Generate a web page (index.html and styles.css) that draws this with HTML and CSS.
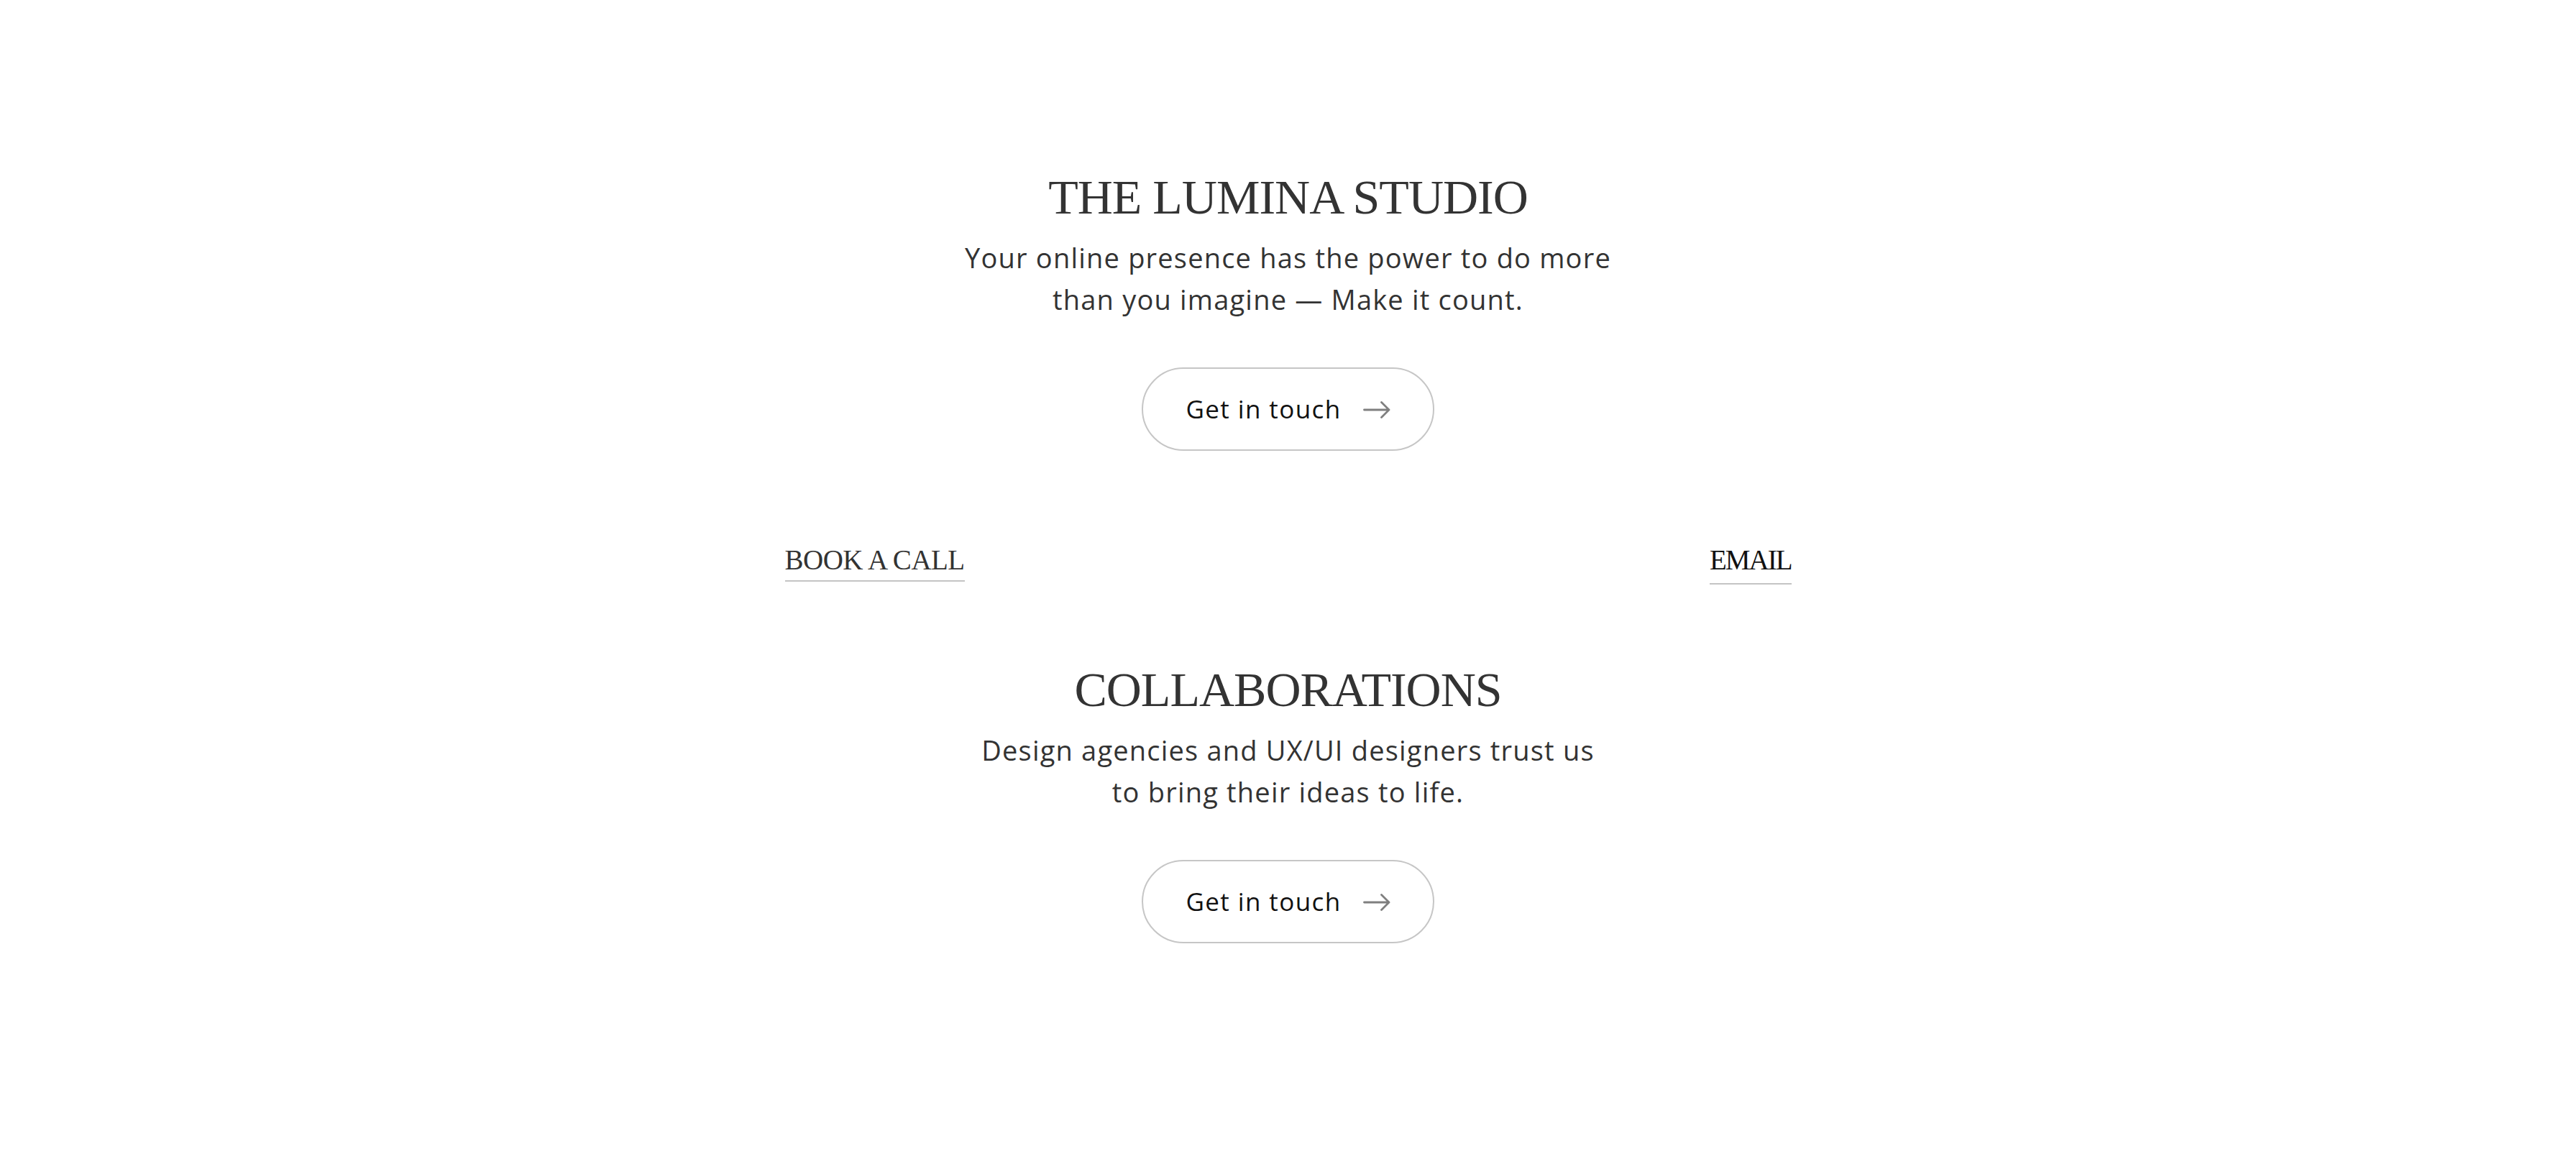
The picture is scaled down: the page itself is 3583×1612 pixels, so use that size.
FILE: index.html
```html
<!DOCTYPE html>
<html lang="en">
<head>
<meta charset="utf-8">
<title>The Lumina Studio</title>
<link rel="stylesheet" href="styles.css">
</head>
<body>
<main class="page">
  <section class="block">
    <h1 class="heading">THE LUMINA STUDIO</h1>
    <p class="lead">Your online presence has the power to do more<br>than you imagine — Make it count.</p>
    <a class="pill" href="#">
      <span class="pill-label">Get in touch</span>
      <svg class="pill-arrow" viewBox="0 0 38 24" width="38" height="24" aria-hidden="true"><path d="M1.5 12H36M25.5 1.5L36 12L25.5 22.5" fill="none" stroke="#7f7f7f" stroke-width="2.8" stroke-linecap="round" stroke-linejoin="round"/></svg>
    </a>
  </section>

  <nav class="links">
    <a class="link" href="#">BOOK A CALL</a>
    <a class="link link-email" href="#">EMAIL</a>
  </nav>

  <section class="block block-second">
    <h2 class="heading">COLLABORATIONS</h2>
    <p class="lead">Design agencies and UX/UI designers trust us<br>to bring their ideas to life.</p>
    <a class="pill" href="#">
      <span class="pill-label">Get in touch</span>
      <svg class="pill-arrow" viewBox="0 0 38 24" width="38" height="24" aria-hidden="true"><path d="M1.5 12H36M25.5 1.5L36 12L25.5 22.5" fill="none" stroke="#7f7f7f" stroke-width="2.8" stroke-linecap="round" stroke-linejoin="round"/></svg>
    </a>
  </section>
</main>
</body>
</html>
```

FILE: styles.css
```css
html, body {
  margin: 0;
  padding: 0;
  background: #ffffff;
}

body {
  font-family: "Open Sans", "Liberation Sans", sans-serif;
  color: #333333;
}

.page {
  width: 1400px;
  margin: 0 auto;
  padding-top: 234px;
  display: flex;
  flex-direction: column;
}

.block {
  display: flex;
  flex-direction: column;
  align-items: center;
  text-align: center;
}

.block-second {
  margin-top: 106px;
}

.heading {
  margin: 0;
  font-family: "Liberation Serif", "Times New Roman", serif;
  font-weight: 400;
  font-size: 68px;
  line-height: 80px;
  letter-spacing: -1px;
  color: #333333;
}

.lead {
  margin: 15px 0 0;
  font-size: 38px;
  line-height: 58px;
  font-weight: 400;
  letter-spacing: 1.2px;
  color: #333333;
}

.pill {
  margin-top: 66px;
  box-sizing: border-box;
  width: 407px;
  height: 116px;
  border: 2px solid #c6c6c6;
  border-radius: 58px;
  display: flex;
  align-items: center;
  justify-content: center;
  gap: 30px;
  text-decoration: none;
  color: #111111;
}

.pill-label {
  font-size: 35px;
  line-height: 40px;
  letter-spacing: 1.4px;
  color: #111111;
}

.pill-arrow {
  display: block;
  flex: none;
  margin-top: 2px;
}

.links {
  margin-top: 128px;
  display: flex;
  justify-content: space-between;
  align-items: flex-start;
}

.link {
  font-family: "Liberation Serif", "Times New Roman", serif;
  font-size: 39px;
  line-height: 48px;
  letter-spacing: -0.5px;
  color: #333333;
  text-decoration: none;
  padding: 0 0 4px;
  border-bottom: 2px solid #c4c4c4;
}

.link-email {
  color: #111111;
  letter-spacing: -2px;
  padding-bottom: 8px;
}
```
